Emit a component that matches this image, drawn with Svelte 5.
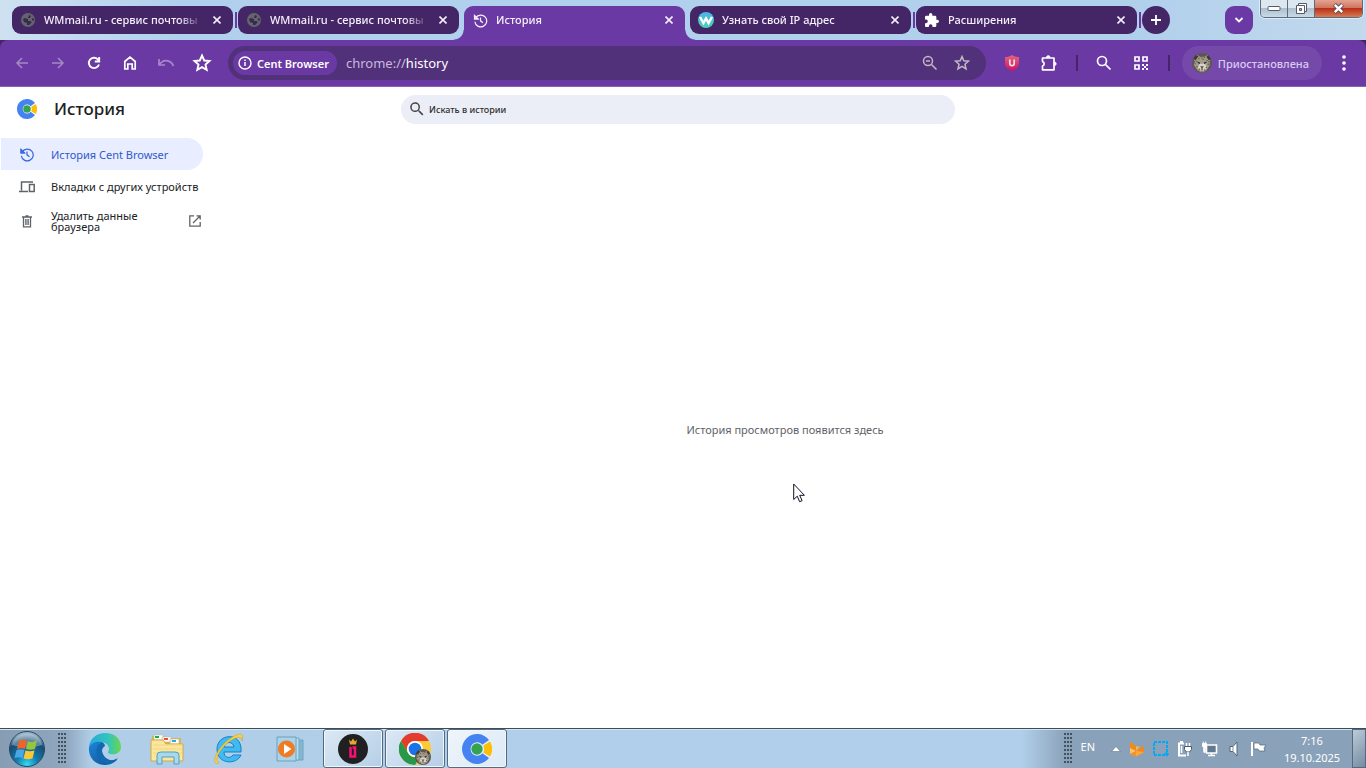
<script>
  const tabs = [
    { title: 'WMmail.ru - сервис почтовы', icon: 'globe' },
    { title: 'WMmail.ru - сервис почтовы', icon: 'globe' },
    { title: 'История', icon: 'history', active: true },
    { title: 'Узнать свой IP адрес', icon: 'w' },
    { title: 'Расширения', icon: 'puzzle' }
  ];
  const spots = [
    [9, 6], [14, 5], [20, 7], [6, 11], [24, 12], [11, 9], [18, 10], [5, 17], [26, 18], [8, 22], [23, 23],
    [12, 26], [20, 27], [4, 14], [27, 14], [16, 3], [8, 14], [22, 15], [16, 8], [10, 29], [16, 30]
  ];
</script>

{#snippet avatar(size)}
  <svg width={size} height={size} viewBox="0 0 32 32" aria-hidden="true">
    <circle cx="16" cy="16" r="16" fill="#5d574c" />
    <path d="M4 8 8 3l5 3h7l5-3 4 6-1 11-5 8-7 3-7-3-6-9z" fill="#a19a8b" />
    <path d="M12 17 9 24l7 6 8-6-3-7z" fill="#d8d3c8" />
    {#each spots as [x, y]}<circle cx={x} cy={y} r="1.1" fill="#5b564b" />{/each}
    <path d="m8 14 5 1-1 3zM24 14l-5 1 1 3z" fill="#25231f" />
    <path d="M13 21h6l-3 4zM15 24h2v4h-2z" fill="#604740" />
    <path d="M2 9 6 3l4 2-4 6zM30 9l-4-6-3 3 4 6z" fill="#3e3a32" />
  </svg>
{/snippet}

{#snippet cent(size)}
  <svg width={size} height={size} viewBox="0 0 30 30" aria-hidden="true">
    <path d="M27 6A15 15 0 1 0 27 24L20.400 19.300A6.700 6.700 0 1 1 20.400 10.700Z" fill="#4583f2" />
    <path d="m21.300 11.600 6.700-4.200a15 15 0 0 1 0 15.200l-6.700-4.200a7.500 7.500 0 0 0 0-6.800z" fill="#fbbf08" />
    <circle cx="15" cy="15" r="5.700" fill="#34a34f" />
  </svg>
{/snippet}

{#snippet history(size)}
  <svg width={size} height={size} viewBox="0 0 24 24" aria-hidden="true">
    <path d="M4.500 7.500A9.500 9.500 0 1 1 3 14M2.500 3.500v6h6" fill="none" stroke="currentColor" stroke-width="2" />
    <path d="M2.500 4v5.500H8zM12 7v5.500l4 3" fill="none" stroke="currentColor" stroke-width="2" />
  </svg>
{/snippet}

{#snippet search(size)}
  <svg width={size} height={size} viewBox="0 0 24 24" fill="currentColor" aria-hidden="true">
    <path d="M15.500 14h-.8l-.3-.3a6.500 6.500 0 1 0-.7.7l.3.3v.8l5 5 1.500-1.500zm-6 0a4.500 4.500 0 1 1 0-9 4.500 4.500 0 0 1 0 9z" />
  </svg>
{/snippet}

<div class="screen">
  <header class="strip">
    <div class="tabs">
      {#each tabs as tab, i}
        <div class="tab" class:active={tab.active} class:divider={i === 0 || i === 3 || i === 4}>
          <span class="favicon">
            {#if tab.icon === 'globe'}
              <svg width="14" height="14" viewBox="0 0 14 14"><circle cx="7" cy="7" r="7" fill="#62666a" /><path d="M2 6 4 5l3 1 0 2 2 0 2 1-3 3-2 0 0-2-3-1zM8 2l2 1-1 2-2 0zM11 5l2 1 0 2-2-1z" fill="#3a2752" /></svg>
            {:else if tab.icon === 'history'}
              {@render history(15)}
            {:else if tab.icon === 'w'}
              <svg width="16" height="16" viewBox="0 0 16 16"><defs><linearGradient id="wg" x2="0" y2="1"><stop stop-color="#4ab5e8" /><stop offset="1" stop-color="#4ad2b8" /></linearGradient></defs><circle cx="8" cy="8" r="8" fill="url(#wg)" /><path d="m2 5 3.500 6L8 6.500l2.500 4.500L14 5" fill="none" stroke="#fff" stroke-width="2.400" /></svg>
            {:else}
              <svg width="14" height="14" viewBox="2 1 21 21" fill="#fff"><path d="M20.500 11H19V7a2 2 0 0 0-2-2h-4V3.500a2.500 2.500 0 0 0-5 0V5H4a2 2 0 0 0-2 2v3.800h1.500a2.700 2.700 0 0 1 0 5.400H2V20c0 1.100.9 2 2 2h3.800v-1.500a2.700 2.700 0 0 1 5.400 0V22H17a2 2 0 0 0 2-2v-4h1.500a2.500 2.500 0 0 0 0-5z" /></svg>
            {/if}
          </span>
          <span class="title">{tab.title}</span>
          <button class="close" aria-label="Закрыть"><svg width="8" height="8" viewBox="0 0 8 8"><path d="m.5.5 7 7M7.500.5l-7 7" stroke="#f4effa" stroke-width="1.600" /></svg></button>
        </div>
      {/each}
      <button class="new" aria-label="Новая вкладка"><svg width="12" height="12" viewBox="0 0 12 12"><path d="M6 1v10M1 6h10" stroke="#fff" stroke-width="1.800" /></svg></button>
    </div>
    <button class="chevron" aria-label="Поиск вкладок"><svg width="10" height="8" viewBox="0 0 10 8"><path d="m1.500 2 3.500 3.500L8.500 2" fill="none" stroke="#fff" stroke-width="1.800" /></svg></button>
    <div class="window">
      <button aria-label="Свернуть"><svg width="14" height="7" viewBox="0 0 14 7"><rect x="1" y="1.500" width="12" height="4" rx="1" fill="#fff" stroke="#555b68" /></svg></button>
      <button aria-label="Развернуть"><svg width="13" height="13" viewBox="0 0 13 13"><path d="M3.500 1.500h8v8h-8z" fill="#fff" stroke="#555b68" /><path d="M1.500 3.500h8v8h-8z" fill="#fff" stroke="#555b68" /><path d="M4.500 6.500h2v2h-2z" fill="#aac" stroke="#555b68" /></svg></button>
      <button class="quit" aria-label="Закрыть окно"><svg width="13" height="11" viewBox="0 0 13 11"><path d="m2.500 1.500 8 8M10.500 1.500l-8 8" stroke="#574b58" stroke-width="4.200" /><path d="m2.800 1.800 7.400 7.400M10.200 1.800 2.800 9.200" stroke="#fff" stroke-width="2.400" /></svg></button>
    </div>
  </header>

  <div class="cap"><nav class="toolbar" aria-label="Панель инструментов">
    <button class="tool dim" aria-label="Назад"><svg width="14" height="14" viewBox="0 0 14 14" class="line"><path d="M13 7H2M7 2 2 7l5 5" /></svg></button>
    <button class="tool dim" aria-label="Вперёд"><svg width="14" height="14" viewBox="0 0 14 14" class="line"><path d="M1 7h11M7 2l5 5-5 5" /></svg></button>
    <button class="tool" aria-label="Обновить"><svg width="14" height="14" viewBox="0 0 14 14" class="line bold"><path d="M12 8.500A5.200 5.200 0 1 1 10.800 3.300L12 4.500M12.200 1v4.500H7.800" /></svg></button>
    <button class="tool" aria-label="Главная"><svg width="14" height="16" viewBox="0 0 14 16" class="line mid"><path d="M1.800 6.500 7 2l5.200 4.500V14H9.200V9H4.800v5h-3z" /></svg></button>
    <button class="tool dim" aria-label="Отменить"><svg width="18" height="12" viewBox="0 0 18 12" class="line mid"><path d="M2 2v6h6M2 8c4-6 11-6 14.500 1" /></svg></button>
    <button class="tool" aria-label="Избранное"><svg width="20" height="20" viewBox="0 0 20 20" class="line bold"><path d="m10 2.500 2.200 5 5.300.5-4 3.600 1.200 5.300L10 14.200l-4.700 2.700 1.200-5.300-4-3.600 5.300-.5z" /></svg></button>
    <div class="address">
      <button class="chip"><svg width="14" height="14" viewBox="0 0 14 14"><circle cx="7" cy="7" r="6" fill="none" stroke="#fff" stroke-width="1.400" /><path d="M7 6v4M7 3.500V5" stroke="#fff" stroke-width="1.500" /></svg>Cent Browser</button>
      <div class="url"><span>chrome://</span>history</div>
      <button class="inner" aria-label="Масштаб"><svg width="16" height="16" viewBox="0 0 16 16" class="line"><circle cx="6" cy="6" r="4.500" /><path d="m9.500 9.500 5 5M4 6h4" /></svg></button>
      <button class="inner" aria-label="Добавить закладку"><svg width="16" height="16" viewBox="0 0 20 20" class="line bold"><path d="m10 2 2.300 5.300 5.700.5-4.300 3.800 1.300 5.700-5-3-5 3 1.300-5.700L2 7.800l5.700-.5z" /></svg></button>
    </div>
    <button class="tool" aria-label="Защита"><svg width="14" height="16" viewBox="0 0 14 16"><defs><linearGradient id="sg" x2="0" y2="1"><stop stop-color="#e4677e" /><stop offset="1" stop-color="#cb1261" /></linearGradient></defs><path d="M7 0c2 1.500 4.500 2 7 2v6c0 4-3 6.500-7 8-4-1.500-7-4-7-8V2c2.500 0 5-.5 7-2z" fill="url(#sg)" /><path d="M4.800 4.500v4a2.200 2.200 0 0 0 4.400 0v-4" fill="none" stroke="#f6dce8" stroke-width="1.700" /></svg></button>
    <button class="tool wide" aria-label="Расширения"><svg width="18" height="18" viewBox="0 0 18 18"><path d="M2.500 4h11.500v11.800H2.500v-3.800a2.300 2.300 0 0 0 0-4.400z" fill="none" stroke="#fff" stroke-width="1.700" stroke-linejoin="round" /><path d="M6.500 3.500a1.800 1.800 0 0 1 3.600 0zM14.300 8a1.800 1.800 0 0 1 0 3.600z" fill="#fff" stroke="#fff" /></svg></button>
    <i class="bar"></i>
    <button class="tool" aria-label="Поиск"><svg width="16" height="16" viewBox="0 0 16 16" class="line mid"><circle cx="6" cy="6" r="4.500" /><path d="m9.500 9.500 5 5" /></svg></button>
    <button class="tool wide" aria-label="QR-код"><svg width="14" height="14" viewBox="0 0 14 14"><path d="M1 1h4v4H1zM9 1h4v4H9zM1 9h4v4H1z" fill="none" stroke="#fff" stroke-width="1.700" /><path d="M8 8h2v2H8zM12 8h2v2h-2zM10 10h2v2h-2zM8 12h2v2H8zM12 12h2v2h-2z" fill="#fff" /></svg></button>
    <i class="bar"></i>
    <button class="profile">{@render avatar(20)}Приостановлена</button>
    <button class="tool menu" aria-label="Меню"><svg width="4" height="16" viewBox="0 0 4 16" fill="#fff"><circle cx="2" cy="2" r="1.800" /><circle cx="2" cy="8" r="1.800" /><circle cx="2" cy="14" r="1.800" /></svg></button>
  </nav></div>

  <main>
    <div class="head">
      <div class="brand">{@render cent(20)}<h1>История</h1></div>
      <label class="search">{@render search(18)}<input type="text" aria-label="Искать в истории" placeholder="Искать в истории" /></label>
    </div>
    <div class="body">
      <nav class="side" aria-label="Разделы">
        <a href="#history" class="current">{@render history(15)}<span>История Cent Browser</span></a>
        <a href="#devices"><svg width="16" height="12" viewBox="0 0 16 12" fill="none" stroke="currentColor" stroke-width="1.500"><path d="M14 1H2.500v8.500M0 10.500h9" /><path d="M10.500 3.500h4.700v7h-4.700z" /></svg><span>Вкладки с других устройств</span></a>
        <a href="#clear" class="two"><svg width="10" height="13" viewBox="0 0 10 13" fill="none" stroke="currentColor" stroke-width="1.300"><path d="M0 2h10M3.500.8h3M1.500 2v9.800h7V2" /><path d="M3.700 4v6M5 4v6M6.300 4v6" stroke-width="1" /></svg><span>Удалить данные браузера</span><svg width="12" height="12" viewBox="0 0 12 12" fill="none" stroke="currentColor" stroke-width="1.300"><path d="M5 .8H.8v10.400h10.400V7M7.500.8h3.700v3.700M11 1 4 8" /></svg></a>
      </nav>
      <section><p>История просмотров появится здесь</p></section>
    </div>
  </main>

  <footer class="taskbar">
    <button class="start" aria-label="Пуск"><svg width="38" height="38" viewBox="0 0 38 38"><defs><radialGradient id="orb" cx=".5" cy=".95" r=".9"><stop stop-color="#35dcf8" /><stop offset=".35" stop-color="#137bad" /><stop offset=".75" stop-color="#184b72" /><stop offset="1" stop-color="#9ab8ca" /></radialGradient></defs><circle cx="19" cy="19" r="17.500" fill="url(#orb)" stroke="#244965" /><path d="M4 15C7 0 31 0 34 15c-9 3-20 3-30 0z" fill="#fff" opacity=".3" /><path d="M11 11c3-2 5-1 8 0l-2 8c-3-1-5-1-8 0z" fill="#ed6527" /><path d="M20 11c3 2 6 1 9-1l-2 9c-3 1-6 1-9 0z" fill="#96c63d" /><path d="M8.500 20c3-1 5-1 8 0l-2 8c-3-1-5-1-8 0z" fill="#4ba6e5" /><path d="M17.500 20.500c3 1 6 1 9 0l-2 8c-3 1-6 1-9 0z" fill="#fbc735" /></svg></button>
    <i class="grip"></i>
    <div class="pins">
      <button aria-label="Edge"><svg width="34" height="34" viewBox="0 0 34 34"><defs><linearGradient id="eg" x2="1"><stop stop-color="#2aa8df" /><stop offset=".6" stop-color="#32c5bd" /><stop offset="1" stop-color="#6bd64b" /></linearGradient><linearGradient id="eb" x2="1" y2="1"><stop stop-color="#1b86d8" /><stop offset="1" stop-color="#134e91" /></linearGradient></defs><path d="M1 15C2 6 9 1 17 1c10 0 16 6 16 14 0 7-8 9-13 6 0-2 1-2 1-4 0-4-4-7-8-7-6 0-10 2-12 5z" fill="url(#eg)" /><path d="M1 15c2-4 7-6 12-5-4 3-4 11 1 15 5 5 11 4 16 1-3 5-8 7-13 7C7 33 0 25 1 15z" fill="url(#eb)" /><path d="M13 10c-5 3-6 12-2 17 4 6 12 6 18 1-8 2-14-3-15-9 0-2 1-4 3-5 0-2-2-4-4-4z" fill="#1268b1" /></svg></button>
      <button aria-label="Проводник"><svg width="34" height="32" viewBox="0 0 34 32"><path d="M2 3h10l2 2h17v22H2z" fill="#d7b75b" /><path d="M4 2h9v5H4zM12 4h9v5h-9zM20 6h9v5h-9z" fill="#fff" stroke="#c2b377" stroke-width=".5" /><path d="M5 3h4v2H5z" fill="#1ead43" /><path d="M14 5h4v2h-4z" fill="#e35332" /><path d="M22 7h4v2h-4z" fill="#36a2ec" /><path d="M1 7h12l3 4h17v17H1z" fill="#fae69c" stroke="#cfaa4c" /><path d="M3 12h29M3 16h29M3 20h29" stroke="#f1d77c" /><path d="M7 31v-9q0-3 4-3h14q4 0 4 3v9h-5v-7H12v7z" fill="#a5d9ed" stroke="#5a9cbb" /></svg></button>
      <button aria-label="Internet Explorer"><svg width="32" height="34" viewBox="0 0 32 34"><path d="M11 20h17C30-1 4 1 4 17c0 16 20 16 24 6h-8c-3 4-9 3-9-3zm0-5c1-6 9-6 10 0z" fill="#41baf0" fill-rule="evenodd" stroke="#1681c5" /><path d="M6 31C-3 34 3 18 14 9 24 1 32-1 29 9c0-5-4-5-12 0C8 15 0 28 6 31z" fill="#fbd342" stroke="#c99a1b" stroke-width=".5" /></svg></button>
      <button aria-label="Проигрыватель"><svg width="30" height="28" viewBox="0 0 30 28"><path d="M9 5h18v20H9z" fill="#83b7d3" stroke="#6fa5c2" /><path d="M5 3h18v22H5z" fill="#b9dceb" stroke="#70a9c5" /><path d="M1 2h19v24H1z" fill="#a9d3e8" stroke="#6ca1be" /><circle cx="10.500" cy="14" r="8.500" fill="#f17b22" /><path d="m8 9 7.500 5L8 19z" fill="#fff" /></svg></button>
    </div>
    <div class="running">
      <button aria-label="Приложение"><svg width="30" height="30" viewBox="0 0 30 30"><circle cx="15" cy="15" r="15" fill="#202022" /><path d="m11 5.500 2 2 2-3 2 3 2-2-1 5h-6z" fill="#e4a82d" /><path d="M12.500 13v9.500h4.500V13.500h-2.500" fill="none" stroke="#fc0e73" stroke-width="2.500" /></svg></button>
      <button aria-label="Chrome"><span class="chrome"><svg width="32" height="32" viewBox="0 0 32 32"><circle cx="16" cy="16" r="16" fill="#fcca33" /><path d="M2 8A16 16 0 0 1 30 8H16a8 8 0 0 0-7 12z" fill="#e33b2e" /><path d="M2 8A16 16 0 0 0 16 32l7-12a8 8 0 0 1-14 0z" fill="#279848" /><circle cx="16" cy="16" r="8" fill="#fff" /><circle cx="16" cy="16" r="6.300" fill="#1a73e8" /></svg><span class="badge">{@render avatar(16)}</span></span></button>
      <button class="front" aria-label="Cent Browser">{@render cent(30)}</button>
    </div>
    <div class="tray">
      <i class="grip"></i>
      <span class="lang">EN</span>
      <svg width="10" height="6" viewBox="0 0 10 6"><path d="m.5 5.500 4.500-5 4.500 5z" fill="#fff" stroke="#526475" stroke-width=".5" /></svg>
      <svg width="16" height="16" viewBox="0 0 16 16"><path d="m1 1 6 4v5l-6-3z" fill="#f58a12" /><path d="m1 7 6 3-6 3z" fill="#ffc06a" /><path d="m7 5 4 1-4 4z" fill="#ffb042" /><path d="m1 13 6-3v5.500z" fill="#f79420" /><path d="m7 10 8-5v6l-8 4.500z" fill="#f5861a" /><path d="m7 10 8 1-8 4.500z" fill="#ffa838" /></svg>
      <svg width="16" height="16" viewBox="0 0 16 16"><path d="M1 1h13v13H1z" fill="none" stroke="#08a7f3" stroke-width="2" stroke-dasharray="3 1" /><path d="M11 13h5M13.500 10.500v5" stroke="#0fa5ec" stroke-width="1.600" /></svg>
      <svg width="16" height="16" viewBox="0 0 16 16" fill="none"><path d="M7 2.500H2v12h7" stroke="#fff" stroke-width="2" /><path d="M3 1h3" stroke="#fff" stroke-width="2" /><path d="M4.500 5v7" stroke="#fff" stroke-width="1.500" /><path d="M7.500 5.500h7v3l-2 2.500h-3l-2-2.500z" fill="#fff" stroke="#485b6d" /><path d="M9.500 2v3M12.500 2v3M11 11v4" stroke="#fff" stroke-width="1.500" /></svg>
      <svg width="17" height="16" viewBox="0 0 17 16"><path d="M5.500 4h10v8h-10z" fill="#63798e" stroke="#fff" stroke-width="1.600" /><path d="M7 14.500h7M10.500 12v2" stroke="#fff" stroke-width="1.500" /><path d="M1.500 2.500h4v3l-1.300 1.300v4.500H2.800V6.800L1.500 5.500zM2.300.5v2M4.700.5v2" fill="#fff" stroke="#fff" /></svg>
      <svg width="16" height="16" viewBox="0 0 16 16"><path d="M4 5.500h3l4-4.500v14l-4-4.500H4z" fill="#fff" stroke="#536577" /><path d="M7 5.500v5" stroke="#7f8d9a" /></svg>
      <svg width="17" height="16" viewBox="0 0 17 16"><path d="M2 1v14" stroke="#fff" stroke-width="2" /><path d="M4 2h5l1 2 6 0-2 3 1 3H9L8 8H4z" fill="#fff" stroke="#536577" stroke-width=".7" /></svg>
      <div class="clock"><span>7:16</span><span>19.10.2025</span></div>
      <button class="desktop" aria-label="Показать рабочий стол"></button>
    </div>
  </footer>

  <svg class="pointer" width="12" height="20" viewBox="0 0 12 20" aria-hidden="true"><path d="M.7 1v15.500l3.600-3.300 2.300 5.500 2.500-1-2.400-5.400h4.700z" fill="#fff" stroke="#111127" /></svg>
</div>

<style>
  :global(body) { margin: 0; background: #fff; }
  .screen { position: relative; display: flex; flex-direction: column; min-height: 100vh; font-family: "Noto Sans", "Open Sans", sans-serif; font-size: 11px; color: #202124; overflow: hidden; }
  button { margin: 0; padding: 0; border: 0; background: none; font: inherit; color: inherit; display: flex; align-items: center; justify-content: center; flex: none; }
  svg { display: block; flex: none; }
  .line { fill: none; stroke: currentColor; stroke-width: 1.5; }
  .line.mid { stroke-width: 1.7; }
  .line.bold { stroke-width: 1.9; }

  .strip { display: flex; align-items: flex-start; height: 40px; padding: 0 3px 0 12px; background: linear-gradient(90deg, #cfe1f1 0, #b0d0ed 180px, #b1d0ec 1140px, #c3d9ed 100%); }
  .tabs { display: flex; flex: 1; min-width: 0; gap: 5px; padding-top: 6px; color: #f4effa; }
  .tab { position: relative; display: flex; align-items: center; box-sizing: border-box; flex: 0 1 221px; min-width: 0; height: 28px; padding: 0 10px 0 8px; background: #442566; border-radius: 9px; }
  .tab.divider::after { content: ""; position: absolute; right: -4px; top: 6px; width: 2px; height: 16px; background: #6b39a3; }
  .tab.active { height: 34px; padding-bottom: 6px; background: #6b39a3; border-radius: 9px 9px 0 0; }
  .tab.active::before, .tab.active::after { content: ""; position: absolute; bottom: 0; width: 10px; height: 10px; }
  .tab.active::before { left: -10px; background: radial-gradient(circle at 0 0, transparent 9px, #6b39a3 10px); }
  .tab.active::after { right: -10px; background: radial-gradient(circle at 100% 0, transparent 9px, #6b39a3 10px); }
  .favicon { display: flex; justify-content: center; width: 16px; margin-right: 8px; flex: none; }
  .title { flex: 1; min-width: 0; overflow: hidden; white-space: nowrap; font: 500 11px/18px "Noto Sans", sans-serif; margin-right: 8px; mask-image: linear-gradient(90deg, #000 calc(100% - 24px), transparent); }
  .close { width: 12px; height: 16px; }
  .new { width: 28px; height: 28px; border-radius: 50%; background: #442566; }
  .chevron { width: 28px; height: 28px; margin: 6px 7px 0 0; border-radius: 9px; background: #6b39a3; }
  .window { display: flex; box-sizing: border-box; height: 18px; border: 1px solid #5b6c7d; border-top: 0; border-radius: 0 0 5px 5px; overflow: hidden; box-shadow: 0 0 0 1px #dcecf8; }
  .window button { width: 27px; background: linear-gradient(#dce7ef 45%, #aebfcd 50%, #c8d9e8); border-right: 1px solid #5b6c7d; }
  .window .quit { width: 47px; border: 0; background: linear-gradient(#e4a393 0, #d0755f 45%, #b93019 50%, #d77c54); }

  .cap { background: #442566; }
  .toolbar { display: flex; align-items: center; height: 46px; padding: 0 4px; background: #6b39a3; border-bottom: 1px solid #8961b5; border-radius: 8px 8px 0 0; color: #fff; }
  .tool { width: 36px; height: 34px; }
  .tool.wide { width: 38px; }
  .dim { color: #a588c8; }
  .address { display: flex; align-items: center; flex: 1; min-width: 0; box-sizing: border-box; height: 34px; margin: 0 8px; padding: 0 8px 0 5px; border-radius: 17px; background: #52317b; }
  .chip { height: 24px; gap: 5px; padding: 0 8px 0 5px; border-radius: 12px; background: #6b39a3; font-size: 11px; font-weight: 600; }
  .url { flex: 1; margin-left: 9px; font-size: 13px; }
  .url span { color: #c8b9dd; }
  .inner { width: 32px; height: 28px; color: #c1b8c5; }
  .bar { width: 2px; height: 16px; margin: 0 8px; background: #442566; flex: none; }
  .profile { height: 34px; gap: 6px; margin-left: 4px; padding: 0 13px 0 10px; border-radius: 17px; background: #7549a9; color: #d7ccf4; font-size: 11px; font-weight: 500; }
  .menu { margin-left: 4px; }

  main { flex: 1; display: flex; flex-direction: column; background: #fff; }
  .head { display: grid; grid-template-columns: 1fr minmax(200px, 554px) 1fr; align-items: center; padding: 0 10px 4px 0; height: 44px; }
  .brand { display: flex; align-items: center; gap: 17px; padding-left: 17px; }
  h1 { margin: 0; font-size: 17px; line-height: 24px; font-weight: 500; }
  .search { display: flex; align-items: center; gap: 3px; height: 29px; padding: 0 7px; border-radius: 15px; background: #ebeef7; color: #474747; }
  input { flex: 1; min-width: 0; border: 0; outline: 0; padding: 0; background: none; font: 500 9px "Noto Sans", sans-serif; color: #303030; }
  input::placeholder { color: #303030; opacity: 1; }
  .body { flex: 1; display: flex; }
  .side { width: 204px; flex: none; padding-top: 3px; }
  .side a { display: flex; align-items: center; box-sizing: border-box; width: 202px; height: 33px; margin-left: 1px; padding: 0 2px 0 18px; color: #5f6368; text-decoration: none; line-height: 11px; }
  .side a > svg:first-child { width: 16px; margin-right: 16px; }
  .side span { flex: 1; color: #202124; white-space: nowrap; }
  .side a.current { height: 32px; border-radius: 0 16px 16px 0; background: #e8edff; color: #3667e0; }
  .side a.current span { color: #3159cc; }
  .side a.two { height: 36px; }
  .side .two span { white-space: normal; padding-right: 40px; }
  section { flex: 1; display: flex; align-items: center; justify-content: center; color: #5f6368; }
  p { margin: 0 0 4px; line-height: 16px; }

  .taskbar { display: flex; align-items: center; box-sizing: border-box; height: 40px; border-top: 1px solid #3d4c59; box-shadow: inset 0 1px #d5e5f2; background: linear-gradient(90deg, #879db3 0, #8fa7bf 66px, #b1cee9 92px, #b1cfea calc(100% - 344px), #8aa2b9 calc(100% - 300px), #8aa2b9 100%); }
  .start { width: 54px; height: 39px; overflow: hidden; }
  .grip { width: 9px; height: 31px; margin-left: 4px; flex: none; background: radial-gradient(circle at 1px 1px, #43525f 1px, transparent 1px) 0 0 / 3px 4px; }
  .pins { display: flex; margin-left: 7px; }
  .pins button { width: 62px; height: 39px; }
  .running { display: flex; gap: 2px; margin-left: 1px; }
  .running button { box-sizing: border-box; width: 60px; height: 39px; border: 1px solid #536a80; border-radius: 3px; box-shadow: inset 0 0 0 1px #f0f6fb; background: linear-gradient(135deg, #dce9f5, #b5cee6); }
  .running .front { background: linear-gradient(135deg, #eff5fb, #dce9f6); }
  .chrome { position: relative; }
  .badge { position: absolute; right: 0; bottom: 0; }
  .tray { display: flex; align-items: center; margin-left: auto; gap: 8px; color: #fff; }
  .tray .grip { margin: 0; }
  .lang { margin: 0 8px 4px 0; font-size: 11px; }
  .clock { display: flex; flex-direction: column; align-items: center; width: 64px; margin-left: 5px; font-size: 11px; line-height: 17px; }
  .desktop { box-sizing: border-box; width: 14px; height: 39px; border: 1px solid #536a80; background: linear-gradient(135deg, #bccbd8, #758ca2); }
  .pointer { position: absolute; left: 793px; top: 483px; }
</style>
